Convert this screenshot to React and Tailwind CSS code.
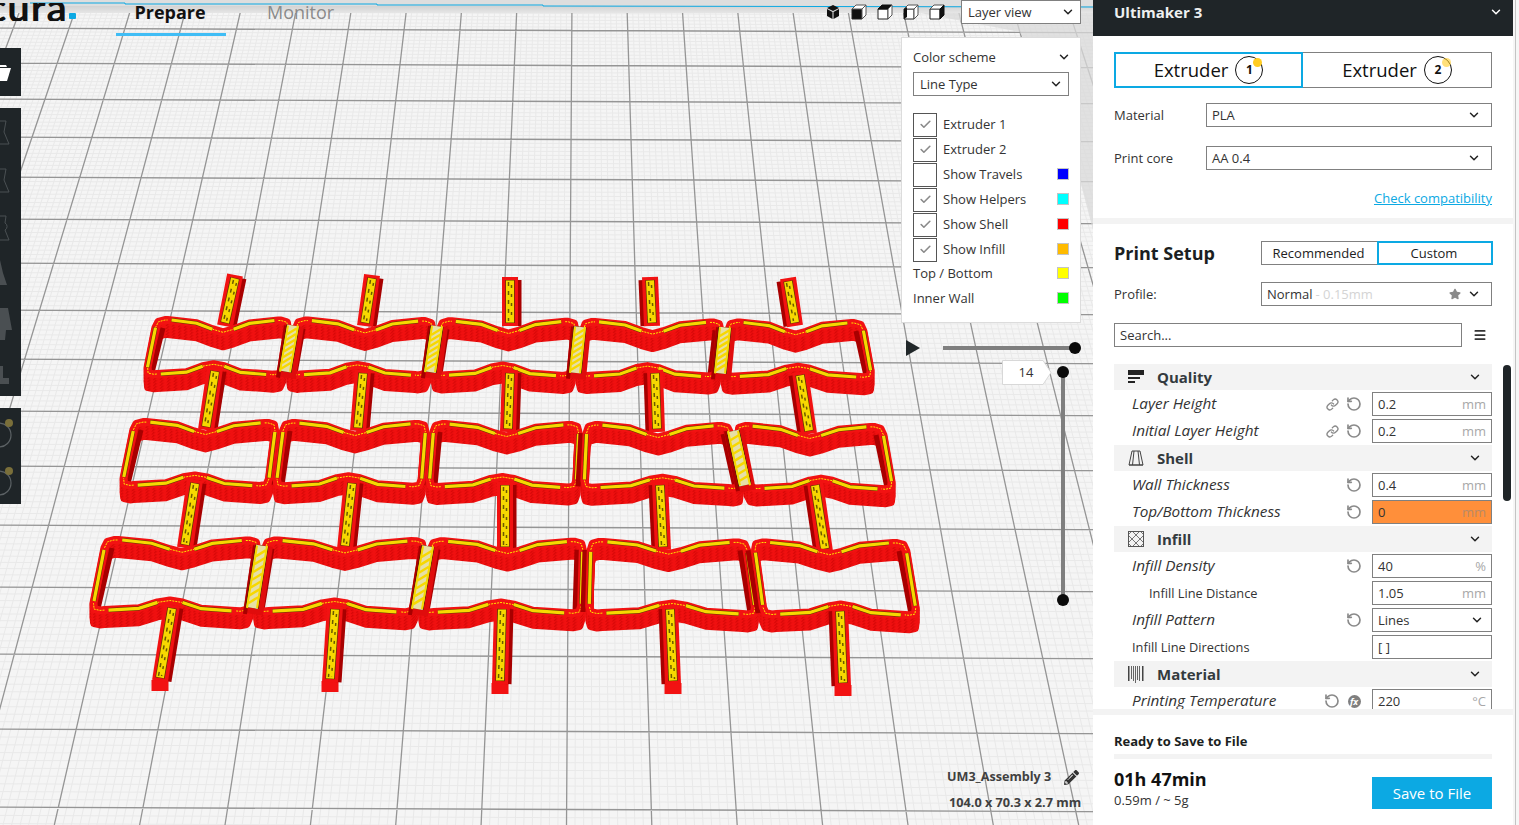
import { ChevronDown, Check, Link, RotateCcw, Menu } from 'lucide-react';
import { FaPencilAlt, FaStar } from 'react-icons/fa';

const BLUE = '#0ca9e3';

// build plate grid, perspective lines run to one vanishing point above the window
const majorY = [-5, 29, 64, 100, 138, 178, 220, 264, 311, 360, 412, 467, 526, 588, 655, 730, 808, 890];
const vanX = 582;
const vanY = -1480;

const vertical = (x5) => {
  const k = (x5 - vanX) / (5 - vanY);
  return `M${(vanX + k * (0 - vanY)).toFixed(1)} 0L${(vanX + k * (825 - vanY)).toFixed(1)} 825`;
};
const horizontal = (y) => `M0 ${(y - 0.8).toFixed(1)}L1519 ${(y + 5.3).toFixed(1)}`;

let minorPath = '';
let majorPath = '';
for (let n = -2; n < 28; n++) {
  const x = 77 + 55 * n;
  majorPath += vertical(x);
  for (let i = 1; i < 10; i++) minorPath += vertical(x + 5.5 * i);
}
majorY.forEach((y, idx) => {
  majorPath += horizontal(y);
  if (idx < majorY.length - 1) {
    const step = (majorY[idx + 1] - y) / 10;
    for (let i = 1; i < 10; i++) minorPath += horizontal(y + step * i);
  }
});

// printed model: three rows of five cells
const rows = [
  { top: [157, 293, 437, 580, 725, 862], ty: [320, 323], bot: [146, 285, 430, 575, 720, 872], by: [375, 378], ladder: [0, 1, 2, 3] },
  { top: [135, 280, 430, 583, 733, 882], ty: [422, 427], bot: [122, 272, 425, 580, 745, 893], by: [486, 490], ladder: [3] },
  { top: [106, 262, 428, 587, 750, 905], ty: [540, 543], bot: [92, 252, 417, 585, 760, 917], by: [611, 616], ladder: [0, 1] },
];

const stems = [
  [[235, 275, 225, 326], [372, 275, 365, 326], [510, 277, 510, 326], [650, 277, 652, 326], [788, 278, 795, 326]],
  [[215, 368, 206, 430], [363, 370, 358, 431], [510, 370, 508, 432], [655, 370, 657, 432], [800, 372, 809, 434]],
  [[195, 480, 185, 548], [352, 480, 345, 549], [505, 482, 505, 550], [660, 482, 663, 550], [815, 482, 825, 552]],
  [[172, 605, 160, 681], [335, 606, 330, 682], [502, 606, 500, 684], [670, 606, 673, 684], [840, 608, 843, 686]],
];

const tTop = [0, 0.08, 0.3, 0.42, 0.5, 0.58, 0.7, 0.92, 1];
const dipTop = [0, 0, 3, 9, 12, 9, 3, 0, 0];
const dipBot = [0, -1, -3, -9, -11, -9, -3, -1, 0];
const lerp = (a, b, t) => a + (b - a) * t;

const edge = (x0, y0, x1, y1, dips) => tTop.map((t, i) => [lerp(x0, x1, t), lerp(y0, y1, t) + dips[i]]);
const str = (pts) => pts.map((p) => `${p[0].toFixed(1)},${p[1].toFixed(1)}`).join(' ');

const toward = (c, p, d) => {
  const len = Math.hypot(p[0] - c[0], p[1] - c[1]);
  return [c[0] + ((p[0] - c[0]) / len) * d, c[1] + ((p[1] - c[1]) / len) * d];
};
const chamfer = (prev, c, next, d = 8) => {
  const a = toward(c, prev, d);
  const b = toward(c, next, d);
  const m = [(a[0] + b[0]) / 2, (a[1] + b[1]) / 2];
  return [a, [lerp(m[0], c[0], 0.55), lerp(m[1], c[1], 0.55)], b];
};

function Cell({ row, i }) {
  const xs = (a) => a[i] + (i > 0 ? 4 : 0);
  const xe = (a) => a[i + 1] - (i < 4 ? 4 : 0);
  const y = (pair, x, a) => lerp(pair[0], pair[1], (x - a[0]) / (a[5] - a[0]));
  const tx0 = xs(row.top);
  const tx1 = xe(row.top);
  const bx0 = xs(row.bot);
  const bx1 = xe(row.bot);
  const top = edge(tx0, y(row.ty, tx0, row.top), tx1, y(row.ty, tx1, row.top), dipTop);
  const bot = edge(bx0, y(row.by, bx0, row.bot), bx1, y(row.by, bx1, row.bot), dipBot);
  const cornerTL = chamfer(bot[0], top[0], top[1]);
  const cornerTR = chamfer(top[7], top[8], bot[8]);
  const cornerBR = chamfer(top[8], bot[8], bot[7]);
  const cornerBL = chamfer(bot[1], bot[0], top[0]);
  const loop = str([...cornerTL, ...top.slice(1, 8), ...cornerTR, ...cornerBR, ...bot.slice(1, 8).reverse(), ...cornerBL]);
  const seg = (pts) => (
    <g>
      <polyline points={str(pts)} fill="none" stroke="#5a3a00" strokeWidth="4.2" />
      <polyline points={str(pts)} fill="none" stroke="#f7d800" strokeWidth="3.2" />
    </g>
  );
  const thin = (pts) => <polyline points={str(pts)} fill="none" stroke="#ffe600" strokeWidth="1" strokeDasharray="2 1" />;
  const wall = (a, b, k0 = 0.14, k1 = 0.86) => [
    [lerp(a[0], b[0], k0), lerp(a[1], b[1], k0)],
    [lerp(a[0], b[0], k1), lerp(a[1], b[1], k1)],
  ];
  const shade = (a, b) => {
    const off = a[0] < vanX ? 6 : -6;
    return <line x1={a[0] + off} y1={a[1] + 8} x2={b[0] + off} y2={b[1] - 2} stroke="#a80000" strokeWidth="5" />;
  };
  const leftPlain = i === 0 || !row.ladder.includes(i - 1);
  const rightPlain = i === 4 || !row.ladder.includes(i);
  return (
    <g>
      {[14, 11, 8, 5, 2].map((dy) => (
        <polygon key={dy} points={loop} transform={`translate(0 ${dy})`} fill="none" stroke="url(#hatch)" strokeWidth="8" strokeLinejoin="round" />
      ))}
      {shade(top[0], bot[0])}
      {shade(top[8], bot[8])}
      <polygon points={loop} fill="none" stroke="#f21212" strokeWidth="8" strokeLinejoin="round" />
      {thin([...cornerTL, top[1]])}
      {thin(top.slice(3, 6))}
      {thin([top[7], ...cornerTR])}
      {thin([...cornerBR, bot[7]])}
      {thin(bot.slice(3, 6))}
      {thin([bot[1], ...cornerBL])}
      {seg(top.slice(1, 4).map((p, k) => (k === 0 ? [p[0] + 4, p[1]] : p)))}
      {seg(top.slice(5, 8).map((p, k) => (k === 2 ? [p[0] - 4, p[1]] : p)))}
      {seg(bot.slice(1, 4).map((p, k) => (k === 0 ? [p[0] + 4, p[1]] : p)))}
      {seg(bot.slice(5, 8).map((p, k) => (k === 2 ? [p[0] - 4, p[1]] : p)))}
      {leftPlain && seg(wall(top[0], bot[0]))}
      {rightPlain && seg(wall(top[8], bot[8]))}
    </g>
  );
}

function Ladder({ x0, y0, x1, y1 }) {
  const rungs = [];
  for (let i = 1; i < 8; i++) {
    const t = i / 8;
    const x = lerp(x0, x1, t);
    const yy = lerp(y0, y1, t);
    rungs.push(<line key={i} x1={x - 5} y1={yy + 3} x2={x + 5} y2={yy - 3} stroke="#f7d800" strokeWidth="2.4" />);
  }
  return (
    <g>
      <line x1={x0 + 1} y1={y0} x2={x1 + 1} y2={y1 + 6} stroke="#e00c0c" strokeWidth="20" />
      <line x1={x0 - 7} y1={y0} x2={x1 - 7} y2={y1 + 6} stroke="#a80000" strokeWidth="4" />
      <line x1={x0} y1={y0} x2={x1} y2={y1} stroke="#3a2c00" strokeWidth="13" />
      <line x1={x0} y1={y0} x2={x1} y2={y1} stroke="#e6dfa6" strokeWidth="11.5" />
      <line x1={x0 - 5} y1={y0} x2={x1 - 5} y2={y1} stroke="#f7d800" strokeWidth="2" />
      <line x1={x0 + 5} y1={y0} x2={x1 + 5} y2={y1} stroke="#f7d800" strokeWidth="2" />
      {rungs}
    </g>
  );
}

function Stem({ s, end }) {
  const [x0, y0, x1, y1] = s;
  const off = x0 < vanX ? 5 : -5;
  return (
    <g>
      {end && <line x1={x1} y1={y1 - 1} x2={x1} y2={y1 + 10} stroke="#f21212" strokeWidth="17" />}
      <line x1={x0 + off} y1={y0 + 3} x2={x1 + off} y2={y1} stroke="#a80000" strokeWidth="13" />
      <line x1={x0} y1={y0} x2={x1} y2={y1} stroke="#f21212" strokeWidth="16" />
      <line x1={x0} y1={y0 + 3} x2={x1} y2={y1 - 3} stroke="#5a3a00" strokeWidth="9.4" />
      <line x1={x0} y1={y0 + 3.5} x2={x1} y2={y1 - 3.5} stroke="#f7d800" strokeWidth="8" />
      <line x1={x0 - 1.5} y1={y0 + 5} x2={x1 - 1.5} y2={y1 - 5} stroke="#6b5a00" strokeWidth="1.5" strokeDasharray="4 5" />
      <line x1={x0 + 1.5} y1={y0 + 8} x2={x1 + 1.5} y2={y1 - 5} stroke="#6b5a00" strokeWidth="1.5" strokeDasharray="3 6" />
    </g>
  );
}

function Model() {
  return (
    <g>
      {stems[0].map((s) => <Stem key={s[0]} s={s} />)}
      {rows.map((row, r) => (
        <g key={r}>
          {[0, 1, 2, 3, 4].map((i) => <Cell key={i} row={row} i={i} />)}
          {row.ladder.map((l) => {
            const t = (row.top[l + 1] - row.top[0]) / (row.top[5] - row.top[0]);
            const b = (row.bot[l + 1] - row.bot[0]) / (row.bot[5] - row.bot[0]);
            return (
              <Ladder
                key={l}
                x0={row.top[l + 1]}
                y0={lerp(row.ty[0], row.ty[1], t) + 5}
                x1={row.bot[l + 1]}
                y1={lerp(row.by[0], row.by[1], b) - 4}
              />
            );
          })}
          {r < 2 && stems[r + 1].map((s) => <Stem key={s[0]} s={s} />)}
          {r === 2 && stems[3].map((s) => <Stem key={s[0]} s={s} end />)}
        </g>
      ))}
    </g>
  );
}

function Scene() {
  return (
    <svg className="absolute inset-0" width="1519" height="825" viewBox="0 0 1519 825">
      <defs>
        <pattern id="hatch" width="5" height="5" patternUnits="userSpaceOnUse" patternTransform="rotate(40)">
          <rect width="5" height="5" fill="#f01010" />
          <rect width="1.4" height="5" fill="#d80808" />
        </pattern>
        <linearGradient id="topfade" x1="0" y1="0" x2="0" y2="1">
          <stop offset="0" stopColor="#cdcdcd" />
          <stop offset="1" stopColor="#e6e6e6" />
        </linearGradient>
      </defs>
      <rect width="1519" height="825" fill="#f5f5f5" />
      <path d={minorPath} stroke="#e9e9e9" strokeWidth="1" fill="none" />
      <path d={majorPath} stroke="#959595" strokeWidth="1.3" fill="none" />
      <polygon points="920,13 1093,6 1093,230 1062,112 1020,32" fill="#d9d9d9" opacity="0.75" />
      <rect x="0" y="4" width="1093" height="9" fill="url(#topfade)" />
      <rect x="0" y="0" width="1093" height="6" fill="#dedede" />
      <polyline points="30,3 125,3 125,4 377,4 377,5 543,5 543,6 1093,7" fill="none" stroke={BLUE} strokeWidth="1" />
      <Model />
    </svg>
  );
}

function Cube({ shade }) {
  return (
    <svg width="16" height="16" viewBox="0 0 16 16">
      <polygon points="1,5 11,5 11,15 1,15" fill={shade === 'front' ? '#111' : 'white'} stroke="#222" />
      <polygon points="1,5 5,1 15,1 11,5" fill={shade === 'top' ? '#111' : 'white'} stroke={shade === 'top' ? '#111' : '#555'} />
      <polygon points="11,5 15,1 15,11 11,15" fill={shade === 'right' ? '#111' : 'white'} stroke={shade === 'right' ? '#111' : '#555'} />
      {shade === 'left' && <polygon points="1,5 4,3 4,13 1,15" fill="#111" />}
    </svg>
  );
}

function IsoCube() {
  return (
    <svg width="16" height="16" viewBox="0 0 16 16">
      <polygon points="8,1 14,4 8,7 2,4" fill="#111" />
      <polygon points="2,5 7.5,8 7.5,15 2,12" fill="#111" />
      <polygon points="14,5 8.5,8 8.5,15 14,12" fill="#111" />
    </svg>
  );
}

function LayerPanel() {
  const boxes = [
    { label: 'Extruder 1', on: true },
    { label: 'Extruder 2', on: true },
    { label: 'Show Travels', color: '#0000ff' },
    { label: 'Show Helpers', on: true, color: '#00ffff' },
    { label: 'Show Shell', on: true, color: '#ff0000' },
    { label: 'Show Infill', on: true, color: '#ffbb00' },
  ];
  return (
    <div className="absolute left-[901px] top-[37px] w-[180px] h-[286px] bg-white border border-[#dcdcdc] px-[11px] pt-[10px] text-[13px] text-[#333]">
      <div className="flex items-center justify-between h-[18px] w-[158px]">
        <span className="pt-[2px]">Color scheme</span>
        <ChevronDown size={14} strokeWidth={2.5} color="#222" />
      </div>
      <div className="mt-[6px] h-[24px] border border-[#808080] flex items-center justify-between pl-[6px] pr-[5px] w-[156px]">
        <span className="pt-[2px]">Line Type</span>
        <ChevronDown size={14} strokeWidth={2.5} color="#222" />
      </div>
      <div className="mt-[16px] flex flex-col">
        {boxes.map((b) => (
          <div key={b.label} className="flex items-center h-[25px] w-[156px]">
            <div className="w-[24px] h-[24px] border border-[#555] flex items-center justify-center bg-white">
              {b.on && <Check size={13} strokeWidth={3} color="#8a8a8a" />}
            </div>
            <span className="ml-[6px] flex-1">{b.label}</span>
            {b.color && <Swatch color={b.color} />}
          </div>
        ))}
        <div className="flex items-center justify-between h-[25px] w-[156px] -mt-px">
          <span>Top / Bottom</span>
          <Swatch color="#ffff00" />
        </div>
        <div className="flex items-center justify-between h-[25px] w-[156px]">
          <span>Inner Wall</span>
          <Swatch color="#00ff00" />
        </div>
      </div>
    </div>
  );
}

const Swatch = ({ color }) => (
  <span className="w-[12px] h-[12px] border border-[#c4c4c4] -mt-px" style={{ backgroundColor: color }} />
);

function LeftBar() {
  return (
    <div className="absolute left-0 top-[48px] w-[21px] flex flex-col gap-[12px]">
      <div className="h-[48px] bg-[#1f2528]">
        <svg width="21" height="48" viewBox="0 0 21 48">
          <polygon points="0,17 6,17 7,19 0,19" fill="white" />
          <polygon points="0,20 11,20 7,33 0,33" fill="white" />
        </svg>
      </div>
      <div className="h-[288px] bg-[#1f2528]">
        <svg width="21" height="288" viewBox="0 0 21 288" fill="none" stroke="#4a5053">
          <path d="M0 13H6L4 24L9 36H0" />
          <path d="M0 61H6L4 72L9 84H0" />
          <path d="M0 108H6L5 115A4 4 0 0 1 5 122L9 132H0" />
          <path d="M0 152L3 165L7 177H0Z" fill="#4a4f52" stroke="none" />
          <path d="M0 200H8L12 222H6L5 232H0Z" fill="#4a4f52" stroke="none" />
          <path d="M0 258H3V270H9V276H0Z" fill="#4a4f52" stroke="none" />
        </svg>
      </div>
      <div className="h-[96px] bg-[#1f2528]">
        <svg width="21" height="96" viewBox="0 0 21 96" fill="none">
          <circle cx="-1" cy="27" r="12" stroke="#5c6265" strokeWidth="1.2" />
          <circle cx="-1" cy="75" r="12" stroke="#5c6265" strokeWidth="1.2" />
          <circle cx="9" cy="15" r="4" fill="#7a6f3a" />
          <circle cx="9" cy="63" r="4" fill="#7a6f3a" />
        </svg>
      </div>
    </div>
  );
}

function Sliders() {
  return (
    <>
      <svg className="absolute left-[905px] top-[339px]" width="16" height="18" viewBox="0 0 16 18">
        <polygon points="1,1 15,9 1,17" fill="#212729" />
      </svg>
      <div className="absolute left-[943px] top-[346px] w-[132px] h-[4px] bg-[#7f7f7f]" />
      <div className="absolute left-[1069px] top-[342px] w-[12px] h-[12px] rounded-full bg-[#0b0b0b]" />
      <div className="absolute left-[1061px] top-[372px] w-[4px] h-[228px] bg-[#7f7f7f]" />
      <div className="absolute left-[1057px] top-[366px] w-[12px] h-[12px] rounded-full bg-[#0b0b0b]" />
      <div className="absolute left-[1057px] top-[594px] w-[12px] h-[12px] rounded-full bg-[#0b0b0b]" />
      <div className="absolute left-[1002px] top-[360px] w-[50px] h-[25px]">
        <svg className="absolute inset-0" width="50" height="25" viewBox="0 0 50 25">
          <polygon points="0.5,0.5 41,0.5 49,12.5 41,24.5 0.5,24.5" fill="white" stroke="#d8d8d8" />
        </svg>
        <span className="relative flex h-full w-[48px] items-center justify-center text-[13px] text-[#333]">14</span>
      </div>
    </>
  );
}

const Chevron = () => <ChevronDown size={14} strokeWidth={2.5} color="#222" />;

function Category({ icon, label }) {
  return (
    <div className="h-[27px] pb-px">
      <div className="h-[26px] bg-[#f3f3f3] flex items-center pl-[13px] pr-[10px]">
        <span className="w-[17px] h-[17px] flex items-center justify-center">{icon}</span>
        <span className="ml-[13px] flex-1 text-[15px] font-bold text-[#333a3e]">{label}</span>
        <Chevron />
      </div>
    </div>
  );
}

const LinkIcon = () => <Link size={13} strokeWidth={2.5} color="#8a8a8a" />;
const ResetIcon = () => <RotateCcw size={16} strokeWidth={2.5} color="#8a8a8a" />;
const FxIcon = () => (
  <span className="w-[13px] h-[13px] rounded-full bg-[#7f7f7f] text-white text-[9px] italic font-bold flex items-center justify-center leading-none">fx</span>
);

function Setting({ label, value, unit, plain, indent, icons = [], orange, select }) {
  return (
    <div className="h-[27px] pt-px pb-[2px] flex items-center">
      <span className={plain ? `pt-[2px] text-[12.8px] text-[#333] ${indent ? 'pl-[35px]' : 'pl-[18px]'} flex-1` : 'pb-[2px] text-[15.3px] italic text-[#333] pl-[18px] flex-1'}>
        {label}
      </span>
      <div className="flex gap-[6px] mr-[10px]">
        {icons.map((Icon, i) => (
          <span key={i} className="w-[16px] h-[16px] flex items-center justify-center"><Icon /></span>
        ))}
      </div>
      <div className={`w-[120px] h-[24px] border border-[#808080] flex items-center justify-between pl-[5px] pr-[5px] text-[13px] text-[#333] ${orange ? 'bg-[#ff8f3a]' : 'bg-white'}`}>
        <span className="pt-[2px]">{value}</span>
        {unit && <span className={`pt-[2px] ${orange ? 'text-[#b98a66]' : 'text-[#a8a8a8]'}`}>{unit}</span>}
        {select && <span className="pr-[2px]"><Chevron /></span>}
      </div>
    </div>
  );
}

function Field({ label, value }) {
  return (
    <div className="flex items-center h-[24px]">
      <span className="w-[92px] pt-[2px] text-[13px] text-[#333]">{label}</span>
      <div className="flex-1 h-[24px] border border-[#808080] flex items-center justify-between pl-[5px] pr-[10px] text-[13px] text-[#333]">
        <span className="pt-[2px]">{value}</span>
        <Chevron />
      </div>
    </div>
  );
}

function ExtruderTab({ n, active }) {
  return (
    <div className={`w-[189px] h-[36px] flex items-center justify-center gap-[7px] ${active ? 'border-2 border-[#0ca9e3]' : 'border border-[#808080] border-l-0'}`}>
      <span className="text-[18.5px] text-[#111]">Extruder</span>
      <span className="relative w-[28px] h-[28px] rounded-full border-[1.5px] border-[#111] flex items-center justify-center text-[12px] font-bold text-[#111]">
        {n}
        <span className={`absolute right-0 top-[1px] w-[9px] h-[9px] rounded-full bg-[#ffcc22] ${active ? '' : 'opacity-60'}`} />
      </span>
    </div>
  );
}

function Sidebar() {
  return (
    <div className="relative w-[420px] h-[825px] bg-white flex flex-col">
      <div className="h-[36px] bg-[#1f2528] flex items-start justify-between pl-[21px] pr-[10px] pt-[2px]">
        <span className="text-[15px] font-bold text-[#eef0f0] leading-[20px]">Ultimaker 3</span>
        <span className="mt-[3px]"><ChevronDown size={14} strokeWidth={2.5} color="white" /></span>
      </div>
      <div className="px-[21px] pt-[16px]">
        <div className="flex w-[378px]">
          <ExtruderTab n={1} active />
          <ExtruderTab n={2} />
        </div>
        <div className="mt-[15px]"><Field label="Material" value="PLA" /></div>
        <div className="mt-[19px]"><Field label="Print core" value="AA 0.4" /></div>
        <div className="mt-[19px] h-[18px] text-right text-[13px] leading-[18px] text-[#0ca9e3] underline">Check compatibility</div>
      </div>
      <div className="mt-[11px] h-[6px] bg-[#f3f3f3]" />
      <div className="px-[21px] pt-[17px]">
        <div className="flex items-center justify-between h-[24px]">
          <span className="text-[18px] font-bold text-[#1b1f22]">Print Setup</span>
          <div className="flex w-[232px] -mr-px text-[13px] text-[#222]">
            <span className="w-[116px] h-[24px] pt-[2px] pr-[2px] border border-[#808080] border-r-0 flex items-center justify-center">Recommended</span>
            <span className="w-[116px] h-[24px] pt-[2px] pr-[2px] border-2 border-[#0ca9e3] flex items-center justify-center">Custom</span>
          </div>
        </div>
        <div className="mt-[17px] flex items-center h-[24px]">
          <span className="w-[147px] pt-[2px] text-[13px] text-[#333]">Profile:</span>
          <div className="w-[231px] h-[24px] border border-[#808080] flex items-center pl-[5px] pr-[10px] text-[13px] text-[#333]">
            <span className="pt-[2px]">Normal</span>
            <span className="ml-[3px] pt-[2px] text-[#d4d4d4] flex-1">- 0.15mm</span>
            <FaStar size={12} color="#8a8a8a" className="mr-[6px]" />
            <Chevron />
          </div>
        </div>
        <div className="mt-[17px] flex items-center h-[24px]">
          <div className="w-[348px] h-[24px] pt-[2px] border border-[#808080] flex items-center pl-[5px] text-[13px] text-[#333]">Search...</div>
          <span className="ml-[11px]"><Menu size={14} strokeWidth={3} color="#333" /></span>
        </div>
      </div>
      <div className="mt-[17px] ml-[21px] w-[378px] h-[345px] overflow-hidden">
        <Category label="Quality" icon={
          <svg width="16" height="15" viewBox="0 0 16 15"><rect width="16" height="5" fill="#222" /><rect y="7" width="12" height="2" fill="#222" /><rect y="11" width="7" height="2" fill="#222" /></svg>
        } />
        <Setting label="Layer Height" value="0.2" unit="mm" icons={[LinkIcon, ResetIcon]} />
        <Setting label="Initial Layer Height" value="0.2" unit="mm" icons={[LinkIcon, ResetIcon]} />
        <Category label="Shell" icon={
          <svg width="16" height="16" viewBox="0 0 16 16" fill="none" stroke="#444"><path d="M4 1H12L15 15H1Z" /><path d="M6 1L4.5 15M10 1L11.5 15M1 15H15" /></svg>
        } />
        <Setting label="Wall Thickness" value="0.4" unit="mm" icons={[ResetIcon]} />
        <Setting label="Top/Bottom Thickness" value="0" unit="mm" orange icons={[ResetIcon]} />
        <Category label="Infill" icon={
          <svg width="16" height="16" viewBox="0 0 16 16" fill="none" stroke="#555"><rect x="0.5" y="0.5" width="15" height="15" /><path d="M0 4L4 0M12 0L16 4M16 12L12 16M4 16L0 12M4 0L16 12M12 0L0 12M0 4L12 16M16 4L4 16" strokeWidth="0.8" /></svg>
        } />
        <Setting label="Infill Density" value="40" unit="%" icons={[ResetIcon]} />
        <Setting label="Infill Line Distance" value="1.05" unit="mm" plain indent />
        <Setting label="Infill Pattern" value="Lines" select icons={[ResetIcon]} />
        <Setting label="Infill Line Directions" value="[ ]" plain />
        <Category label="Material" icon={
          <svg width="16" height="17" viewBox="0 0 16 17" fill="#444"><rect width="1.5" height="15" /><rect x="3" width="0.8" height="13" /><rect x="5" width="0.8" height="15" /><rect x="7" width="0.8" height="17" /><rect x="9" width="0.8" height="14" /><rect x="11" width="0.8" height="15" /><rect x="14" width="1.5" height="15" /></svg>
        } />
        <Setting label="Printing Temperature" value="220" unit="°C" icons={[ResetIcon, FxIcon]} />
      </div>
      <div className="h-[6px] bg-[#f3f3f3]" />
      <div className="px-[21px] pt-[17px]">
        <div className="h-[18px] text-[13px] leading-[18px] font-bold text-[#1b1f22]">Ready to Save to File</div>
        <div className="mt-[4px] h-[5px] bg-[#f3f3f3]" />
        <div className="mt-[8px] flex justify-between">
          <div>
            <div className="h-[24px] text-[18px] leading-[24px] font-bold text-[#111]">01h 47min</div>
            <div className="h-[18px] text-[13px] leading-[18px] text-[#333]">0.59m / ~ 5g</div>
          </div>
          <div className="self-end w-[120px] h-[32px] bg-[#0ca9e3] text-white text-[15px] flex items-center justify-center">Save to File</div>
        </div>
      </div>
      {/* settings scrollbar */}
      <div className="absolute left-[410px] top-[365px] w-[8px] h-[136px] rounded-full bg-[#1f2528]" />
    </div>
  );
}

export default function App() {
  return (
    <div className="relative w-[1519px] h-[825px] overflow-hidden flex justify-end font-['Open_Sans',sans-serif]">
      <Scene />

      {/* logo */}
      <div className="absolute left-0 top-[3px] w-[66px] h-[18px] overflow-hidden">
        <span className="absolute left-[-13px] top-[-20px] text-[40px] leading-[48px] font-bold text-[#111] font-['Lato',sans-serif] tracking-[1px]">cura</span>
      </div>
      <div className="absolute left-[69px] top-[13px] w-[7px] h-[6px] bg-[#0ca9e3] rounded-[1px]" />

      {/* stage tabs */}
      <div className="absolute left-[116px] top-0 flex">
        <div className="w-[110px] h-[36px] border-b-[3px] border-[#40bdf5] flex items-center justify-center text-[18px] font-bold text-[#111] pb-[9px] pr-[2px]">Prepare</div>
        <div className="ml-[41px] h-[25px] text-[18px] leading-[25px] text-[#8a8a8a]">Monitor</div>
      </div>

      <LeftBar />

      {/* view orientation buttons */}
      <div className="absolute left-[825px] top-[4px] flex gap-[10px]">
        <IsoCube />
        <Cube shade="front" />
        <Cube shade="top" />
        <Cube shade="left" />
        <Cube shade="right" />
      </div>

      <div className="absolute left-[961px] top-0 w-[120px] h-[24px] bg-white border border-[#808080] flex items-center justify-between pl-[6px] pr-[5px] text-[13px] text-[#333]">
        <span className="pt-[2px]">Layer view</span>
        <Chevron />
      </div>

      <LayerPanel />
      <Sliders />

      <div className="absolute left-[947px] top-[768px] flex items-center h-[18px] text-[12.6px] font-bold text-[#404040]">
        <span>UM3_Assembly 3</span>
        <FaPencilAlt size={15} color="#333" className="ml-[13px]" />
      </div>
      <div className="absolute left-[949px] top-[793px] h-[18px] text-[12.7px] leading-[18px] font-bold text-[#404040]">104.0 x 70.3 x 2.7 mm</div>

      <div className="relative flex">
        <Sidebar />
        <div className="w-[6px] h-[825px] bg-[#f6f6f6]">
          <div className="ml-[2px] w-px h-full bg-[#c4c4c4]" />
        </div>
      </div>
    </div>
  );
}
